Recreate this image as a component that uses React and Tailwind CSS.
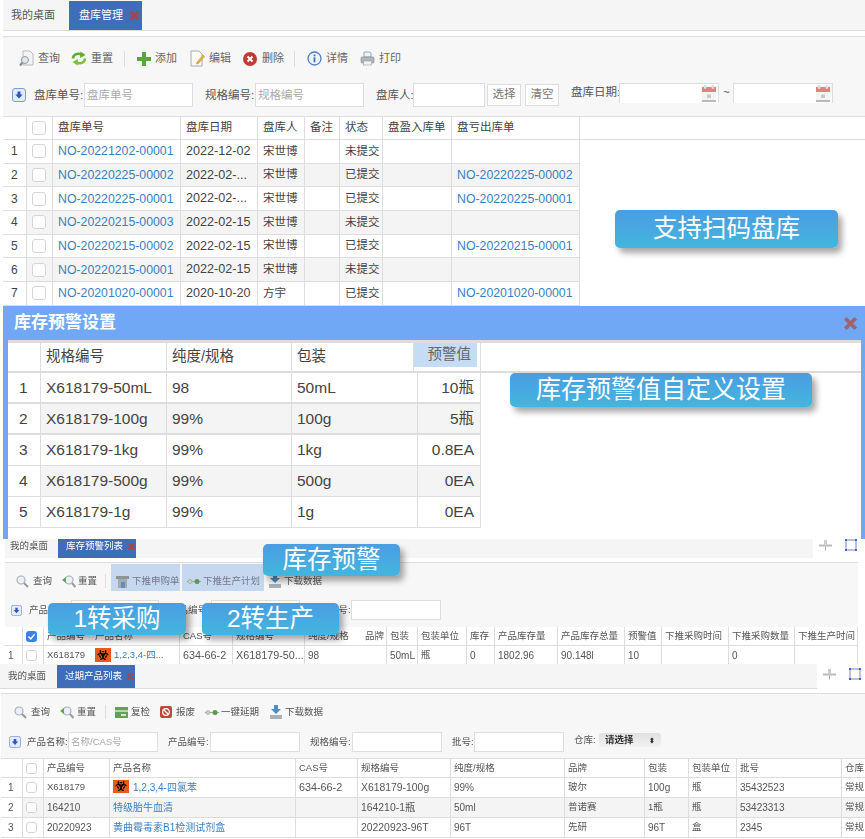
import React from 'react';
import { Biohazard } from 'lucide-react';

const FONT = "font-['Liberation_Sans','Noto_Sans_CJK_SC',sans-serif]";

// Icons
const SearchDoc = () => (
  <svg width="15" height="17" viewBox="0 0 15 17">
    <path d="M4 1h7l3 3v11H4z" fill="#f4f4f4" stroke="#bbb" />
    <circle cx="6" cy="10" r="3.5" fill="#dfe8ee" stroke="#999" />
    <path d="M3.5 12.5L1 15.5" stroke="#888" strokeWidth="2" />
  </svg>
);
const Reload = () => (
  <svg width="16" height="15" viewBox="0 0 16 15">
    <path d="M2 7.5C2 4 6 1.500 10.500 3.500" fill="none" stroke="#5fae2e" strokeWidth="2.6" />
    <path d="M9.500 0.500L14.500 4 9 7z" fill="#5fae2e" />
    <path d="M14 7.500C14 11 10 13.500 5.500 11.500" fill="none" stroke="#7dc242" strokeWidth="2.6" />
    <path d="M6.500 14.500L1.500 11 7 8z" fill="#7dc242" />
  </svg>
);
const Plus = () => (
  <svg width="14" height="14" viewBox="0 0 14 14">
    <path d="M5 0h4v5h5v4H9v5H5V9H0V5h5z" fill="#57a83a" />
  </svg>
);
const EditDoc = () => (
  <svg width="15" height="17" viewBox="0 0 15 17">
    <path d="M1 1h8l3 3v12H1z" fill="#fbfbf5" stroke="#aaa" />
    <path d="M7 12l6-7 1.5 1.5-6 7-2 .5z" fill="#e8b43c" stroke="#b5862a" strokeWidth="0.5" />
  </svg>
);
const DeleteIcon = () => (
  <svg width="14" height="14" viewBox="0 0 14 14">
    <circle cx="7" cy="7" r="7" fill="#c23b36" />
    <path d="M4.5 4.5l5 5M9.5 4.5l-5 5" stroke="#fff" strokeWidth="2" />
  </svg>
);
const InfoIcon = () => (
  <svg width="15" height="15" viewBox="0 0 15 15">
    <circle cx="7.5" cy="7.5" r="6.5" fill="#eef4fc" stroke="#4f7fc8" strokeWidth="1.3" />
    <rect x="6.6" y="6.3" width="1.8" height="5" fill="#3f6fb8" />
    <rect x="6.6" y="3.5" width="1.8" height="1.8" fill="#3f6fb8" />
  </svg>
);
const Printer = () => (
  <svg width="15" height="15" viewBox="0 0 15 15">
    <path d="M4 1h6l1 1v4H4z" fill="#eef3f8" stroke="#9aa5b0" />
    <rect x="1" y="6" width="13" height="6" rx="1" fill="#aeb6bd" stroke="#808890" strokeWidth="0.6" />
    <rect x="3.5" y="10" width="8" height="4" fill="#f2f2f2" stroke="#999" strokeWidth="0.6" />
  </svg>
);
const ArrowButton = ({ size = 'w-[14px] h-[14px]' }) => (
  <svg className={size} viewBox="0 0 14 14">
    <rect x="0.5" y="0.5" width="13" height="13" rx="2.5" fill="#e3ecfa" stroke="#7d9bd6" />
    <path d="M5.5 3.5h3v3h2.2L7 10.5 3.3 6.5h2.2z" fill="#2b56c4" />
  </svg>
);
const Calendar = () => (
  <svg width="14" height="17" viewBox="0 0 14 17">
    <rect x="0" y="1" width="14" height="16" fill="#f4f4f2" />
    <rect x="0" y="2" width="14" height="5" fill="#e2827c" />
    <rect x="2" y="0" width="2.5" height="4" rx="1" fill="#ddd" />
    <rect x="9.5" y="0" width="2.5" height="4" rx="1" fill="#ddd" />
    <rect x="0" y="15" width="14" height="2" fill="#b9b9b9" />
    <rect x="5" y="9.5" width="4" height="3.5" fill="#c9c9c9" />
  </svg>
);
const CloseX = ({ size = 'w-[13px] h-[13px]', color = '#a8444e' }) => (
  <svg className={size} viewBox="0 0 13 13">
    <path d="M1.5 3.5l2-2 3 3 3-3 2 2-3 3 3 3-2 2-3-3-3 3-2-2 3-3z" fill={color} />
  </svg>
);
const Magnifier = () => (
  <svg width="13" height="13" viewBox="0 0 13 13">
    <circle cx="5" cy="5" r="4" fill="#eaf0f5" stroke="#aab2ba" strokeWidth="1.2" />
    <path d="M8 8l4 4" stroke="#999" strokeWidth="2" />
  </svg>
);
const ResetGlass = () => (
  <svg width="14" height="13" viewBox="0 0 14 13">
    <circle cx="7" cy="5" r="4" fill="#eaf0f5" stroke="#aab2ba" strokeWidth="1.2" />
    <path d="M10 8l3.5 4" stroke="#999" strokeWidth="2" />
    <path d="M0 5l4-3v6z" fill="#5fa83e" />
  </svg>
);
const LinkIcon = () => (
  <svg width="14" height="7" viewBox="0 0 14 7">
    <path d="M0 3.5h14" stroke="#9ab08f" strokeWidth="1" />
    <circle cx="3" cy="3.5" r="2" fill="#c9d4c4" stroke="#8d9c88" strokeWidth="0.6" />
    <circle cx="10" cy="3.5" r="2.5" fill="#5d9a4f" />
  </svg>
);
const Download = () => (
  <svg width="12" height="14" viewBox="0 0 12 14">
    <path d="M4 0h4v4h3L6 9 1 4h3z" fill="#4a90c8" />
    <rect x="0" y="10" width="12" height="4" fill="#a9b0b6" />
  </svg>
);
const Building = () => (
  <svg width="13" height="13" viewBox="0 0 13 13">
    <rect x="0" y="1" width="13" height="3" fill="#8d9498" />
    <rect x="2" y="4" width="9" height="9" fill="#a4abb0" />
    <rect x="5" y="7" width="4" height="6" fill="#5f8fbd" />
  </svg>
);
const CardIcon = () => (
  <svg width="13" height="11" viewBox="0 0 13 11">
    <rect width="13" height="11" fill="#5fa05a" />
    <rect x="0" y="3" width="13" height="2" fill="#b7d7a8" />
    <rect x="6" y="7" width="5" height="2" fill="#d9e8c8" />
  </svg>
);
const ScrapIcon = () => (
  <svg width="12" height="12" viewBox="0 0 12 12">
    <rect width="12" height="12" rx="2" fill="#c2463c" />
    <circle cx="6" cy="6" r="3.3" fill="none" stroke="#fff" strokeWidth="1.2" />
    <path d="M3.5 3.5l5 5" stroke="#fff" strokeWidth="1.2" />
  </svg>
);
const PinIcon = () => (
  <svg width="13" height="11" viewBox="0 0 13 11">
    <rect x="0" y="4.5" width="13" height="2" fill="#bbb" />
    <rect x="5" y="0" width="3" height="4.5" fill="#ccc" />
    <rect x="6" y="6.5" width="1" height="4" fill="#aaa" />
  </svg>
);
const SquareIcon = () => (
  <svg width="12" height="12" viewBox="0 0 12 12">
    <rect x="1" y="1" width="10" height="10" fill="none" stroke="#8d9cc4" strokeWidth="1.2" />
    <rect x="0" y="0" width="2" height="2" fill="#4466cc" />
    <rect x="10" y="0" width="2" height="2" fill="#4466cc" />
    <rect x="0" y="10" width="2" height="2" fill="#4466cc" />
    <rect x="10" y="10" width="2" height="2" fill="#4466cc" />
  </svg>
);
const Hazard = ({ className }) => (
  <span className={`inline-flex shrink-0 items-center justify-center bg-[#ef5a1c] ${className}`}>
    <Biohazard className="w-[12px] h-[12px] text-black" strokeWidth={2.5} />
  </span>
);

const Check = ({ checked, size = 'w-[14px] h-[14px]' }) =>
  checked ? (
    <span className={`block rounded-[3px] bg-[#3b82e6] ${size}`}>
      <svg viewBox="0 0 14 14" className="w-full h-full">
        <path d="M3 7l3 3 5-6" fill="none" stroke="#fff" strokeWidth="1.8" />
      </svg>
    </span>
  ) : (
    <span className={`block rounded-[3px] border border-[#d5d5d5] bg-white ${size}`} />
  );

const Tool = ({ icon, label, className = 'gap-[4px]' }) => (
  <div className={`flex shrink-0 items-center whitespace-nowrap ${className}`}>
    {icon}
    <span>{label}</span>
  </div>
);

const Callout = ({ className, children }) => (
  <div
    className={`absolute z-10 flex items-center justify-center whitespace-nowrap rounded-[5px] bg-gradient-to-b from-[#4a9de2] to-[#42b6de] text-white text-[24.5px] shadow-[4px_5px_6px_rgba(0,0,0,0.35)] ${FONT} ${className}`}
  >
    {children}
  </div>
);

// Generic row: cells sit in a grid, with a right border on each one
const Row = ({ cols, className = '', cells, cellClass = '' }) => (
  <div className={`grid ${cols} ${className}`}>
    {cells.map((c, i) => (
      <div
        key={i}
        className={`flex items-center border-r border-[#dddddd] overflow-hidden whitespace-nowrap first:bg-white ${cellClass}`}
      >
        {c}
      </div>
    ))}
  </div>
);

const LINK = 'text-[#3a7fc1]';

// small tables: latin text is a little wider than the CJK size suggests
const Small = ({ v }) => {
  if (!/^[\x00-\x7f]+$/.test(v)) return <span>{v}</span>;
  return <span className={v.includes('-') ? 'text-[10.8px]' : 'text-[10px]'}>{v}</span>;
};

const stockRows = [
  ['NO-20221202-00001', '2022-12-02', '宋世博', '未提交', ''],
  ['NO-20220225-00002', '2022-02-...', '宋世博', '已提交', 'NO-20220225-00002'],
  ['NO-20220225-00001', '2022-02-...', '宋世博', '已提交', 'NO-20220225-00001'],
  ['NO-20220215-00003', '2022-02-15', '宋世博', '未提交', ''],
  ['NO-20220215-00002', '2022-02-15', '宋世博', '已提交', 'NO-20220215-00001'],
  ['NO-20220215-00001', '2022-02-15', '宋世博', '未提交', ''],
  ['NO-20201020-00001', '2020-10-20', '方宇', '已提交', 'NO-20201020-00001'],
];

const StockCheck = () => {
  const cols = 'grid-cols-[24px_26px_128px_77px_47px_35px_43px_69px_128px]';
  return (
    <section className="relative h-[306px] bg-white text-[#444] text-[11.5px]">
      <div className="ml-[3px] h-[31px] bg-[#f5f5f5] border-b border-[#dcdcdc] flex text-[11px] whitespace-nowrap">
        <div className="ml-[8px] w-[58px] flex items-center text-[#555]">我的桌面</div>
        <div className="mt-[1px] w-[73px] bg-[#3f6db8] text-white flex items-center pl-[10px] gap-[5px]">
          盘库管理
          <CloseX />
        </div>
      </div>
      <div className="mt-[5px] ml-[3px] h-[80px] bg-[#f7f7f7] border-t border-[#dcdcdc]">
        <div className="flex items-center h-[43px] pl-[16px] text-[#666] text-[11px]">
          <Tool icon={<SearchDoc />} label="查询" />
          <Tool icon={<Reload />} label="重置" className="ml-[11px] gap-[4px]" />
          <div className="ml-[11px] w-px h-[16px] bg-[#ddd]" />
          <Tool icon={<Plus />} label="添加" className="ml-[12px] gap-[4px]" />
          <Tool icon={<EditDoc />} label="编辑" className="ml-[13px] gap-[4px]" />
          <Tool icon={<DeleteIcon />} label="删除" className="ml-[12px] gap-[5px]" />
          <div className="ml-[10px] w-px h-[16px] bg-[#ddd]" />
          <Tool icon={<InfoIcon />} label="详情" className="ml-[12px] gap-[4px]" />
          <Tool icon={<Printer />} label="打印" className="ml-[12px] gap-[4px]" />
        </div>
        <div className="flex items-start h-[25px] mt-[3px] pl-[9px] text-[#555] whitespace-nowrap">
          <div className="mt-[5px]">
            <ArrowButton />
          </div>
          <span className="ml-[8px] w-[50px] leading-[24px]">盘库单号:</span>
          <div className="w-[109px] h-[24px] border border-[#ddd] bg-white pl-[2px] leading-[22px] text-[#aaa]">盘库单号</div>
          <span className="ml-[12px] w-[50px] leading-[24px]">规格编号:</span>
          <div className="w-[109px] h-[24px] border border-[#ddd] bg-white pl-[2px] leading-[22px] text-[#aaa]">规格编号</div>
          <span className="ml-[12px] w-[37px] leading-[24px]">盘库人:</span>
          <div className="w-[72px] h-[24px] border border-[#ddd] bg-white" />
          <div className="ml-[2px] mt-[1px] w-[34px] h-[22px] border border-[#ddd] bg-white flex items-center justify-center text-[#777]">选择</div>
          <div className="ml-[4px] mt-[1px] w-[34px] h-[22px] border border-[#ddd] bg-white flex items-center justify-center text-[#777]">清空</div>
          <span className="ml-[12px] w-[48px] leading-[19px]">盘库日期:</span>
          <div className="w-[100px] h-[20px] border border-b-0 border-[#ddd] bg-white flex justify-end pr-[2px] pt-[1px]">
            <Calendar />
          </div>
          <span className="ml-[4px] w-[10px] leading-[19px]">~</span>
          <div className="w-[100px] h-[20px] border border-b-0 border-[#ddd] bg-white flex justify-end pr-[2px] pt-[1px]">
            <Calendar />
          </div>
        </div>
      </div>
      <div className="ml-[3px]">
        <div className="border-t border-[#dddddd]">
          <Row
            cols={cols}
            className="h-[23px] border-b border-[#dddddd]"
            cellClass="pl-[5px]"
            cells={['', <Check />, '盘库单号', '盘库日期', '盘库人', '备注', '状态', '盘盈入库单', '盘亏出库单']}
          />
        </div>
        {stockRows.map((r, i) => (
          <Row
            key={i}
            cols={cols}
            className={`h-[23.7px] w-[577px] border-b border-[#dddddd] ${i % 2 === 1 ? 'bg-[#f4f4f4]' : ''}`}
            cellClass="pl-[5px]"
            cells={[
              <span className="pl-[3px] text-[12px]">{i + 1}</span>,
              <Check />,
              <span className={`${LINK} text-[12.3px]`}>{r[0]}</span>,
              <span className="text-[12.6px]">{r[1]}</span>,
              r[2],
              '',
              r[3],
              '',
              <span className={`${LINK} text-[12.3px]`}>{r[4]}</span>,
            ]}
          />
        ))}
      </div>
      <Callout className="left-[615px] top-[210px] w-[223px] h-[38px]">支持扫码盘库</Callout>
    </section>
  );
};

const warnRows = [
  ['X618179-50mL', '98', '50mL', '10瓶'],
  ['X618179-100g', '99%', '100g', '5瓶'],
  ['X618179-1kg', '99%', '1kg', '0.8EA'],
  ['X618179-500g', '99%', '500g', '0EA'],
  ['X618179-1g', '99%', '1g', '0EA'],
];

const WarnDialog = () => {
  const cols = 'grid-cols-[33px_126px_125px_126px_63px]';
  const headCols = 'grid-cols-[33px_126px_125px_122px_67px]';
  return (
    <section className="relative h-[233px] pl-[3px] bg-white">
      <div className="h-full bg-[#70a8f5] flex flex-col">
        <div className="h-[34px] flex items-center justify-between pl-[11px] pr-[6px] text-white font-bold text-[17px]">
          库存预警设置
          <CloseX size="w-[17px] h-[17px]" color="#a0646e" />
        </div>
        <div className="ml-[5px] mr-[4px] flex-1 bg-white border-t-[3px] border-[#dddddd] text-[#444] text-[15.5px]">
          <div className="border-b-2 border-[#dddddd] h-[30px]">
            <Row
              cols={headCols}
              className="h-full w-[473px]"
              cellClass="pl-[5px] last:pl-0"
              cells={[
                '',
                <span className="text-[14.5px]">规格编号</span>,
                <span className="text-[14.5px]">纯度/规格</span>,
                <span className="text-[14.5px]">包装</span>,
                <span className="w-[63px] h-[24px] self-start bg-[#c5dcf7] text-[#666] text-[14.5px] flex items-center justify-end pr-[6px]">预警值</span>,
              ]}
            />
          </div>
          {warnRows.map((r, i) => (
            <Row
              key={i}
              cols={cols}
              className={`w-[473px] h-[31px] ${i < 2 ? 'border-b-2' : 'border-b'} border-[#dddddd] ${i % 2 === 1 ? 'bg-[#f4f4f4]' : ''}`}
              cellClass="pl-[5px]"
              cells={[
                <span className="pl-[6px]">{i + 1}</span>,
                r[0],
                r[1],
                r[2],
                <span className="w-full text-right pr-[6px]">{r[3]}</span>,
              ]}
            />
          ))}
        </div>
      </div>
      <Callout className="left-[510px] top-[67px] w-[302px] h-[34px] text-[25px]">库存预警值自定义设置</Callout>
    </section>
  );
};

const WarnList = () => {
  const cols = 'grid-cols-[18px_21px_136px_53px_72px_82px_31px_49px_28px_63px_67px_37px_67px_66px_63px]';
  return (
    <section className="relative h-[125px] bg-white text-[9.5px] text-[#555] whitespace-nowrap">
      <div className="blur-[0.4px] h-full">
        <div className="flex h-[23px] items-start">
          <div className="ml-[5px] w-[808px] h-[19px] bg-[#f5f5f5] flex">
            <div className="ml-[5px] w-[48px] pb-[4px] flex items-center">我的桌面</div>
            <div className="w-[78px] pb-[4px] bg-[#3f6db8] text-white flex items-center pl-[8px] gap-[4px]">
              库存预警列表
              <CloseX size="w-[9px] h-[9px]" />
            </div>
          </div>
          <div className="ml-[6px] h-[12px] flex items-center gap-[13px]">
            <PinIcon />
            <SquareIcon />
          </div>
        </div>
        <div className="ml-[5px] w-[853px] h-[65px] bg-[#f7f7f7] border-t border-[#dddddd]">
          <div className="flex items-center h-[36px] pl-[11px]">
            <Tool icon={<Magnifier />} label="查询" className="gap-[4px]" />
            <Tool icon={<ResetGlass />} label="重置" className="ml-[10px] gap-[2px]" />
            <div className="ml-[8px] w-px h-[14px] bg-[#ddd]" />
            <Tool icon={<Building />} label="下推申购单" className="ml-[5px] self-start mt-[1px] w-[69px] h-[27px] bg-[#c5d8f0] pl-[5px] pt-[7px] gap-[3px] text-[#778]" />
            <Tool icon={<LinkIcon />} label="下推生产计划" className="ml-[2px] self-start mt-[1px] w-[82px] h-[27px] bg-[#c5d8f0] pl-[5px] pt-[7px] gap-[2px] text-[#778]" />
            <Tool icon={<Download />} label="下载数据" className="ml-[5px] gap-[3px]" />
          </div>
          <div className="flex items-center h-[20px] mt-[1px] pl-[6px]">
            <ArrowButton size="w-[11px] h-[11px]" />
            <span className="ml-[7px] w-[42px]">产品名称:</span>
            <div className="w-[88px] h-[20px] border border-[#ddd] bg-white pl-[2px] leading-[18px] text-[#aaa]">名称/CAS号</div>
            <span className="ml-[10px] w-[42px]">产品编号:</span>
            <div className="w-[89px] h-[20px] border border-[#ddd] bg-white" />
            <span className="ml-[10px] w-[41px]">规格编号:</span>
            <div className="w-[90px] h-[20px] border border-[#ddd] bg-white" />
          </div>
        </div>
        <div className="ml-[5px] w-[853px]">
          <Row
            cols={cols}
            className="h-[19px] bg-white border-b border-[#dddddd]"
            cellClass="pl-[3px]"
            cells={[
              '',
              <Check checked size="w-[11px] h-[11px]" />,
              <span className="flex">
                <span className="w-[48px]">产品编号</span>产品名称
              </span>,
              'CAS号',
              '规格编号',
              <span className="flex">
                <span className="w-[57px]">纯度/规格</span>品牌
              </span>,
              '包装',
              '包装单位',
              '库存',
              '产品库存量',
              '产品库存总量',
              '预警值',
              '下推采购时间',
              '下推采购数量',
              '下推生产时间',
            ]}
          />
          <Row
            cols={cols}
            className="h-[18px] bg-white"
            cellClass="pl-[3px]"
            cells={[
              <Small v="1" />,
              <Check size="w-[11px] h-[11px]" />,
              <span className="flex items-center">
                <span className="w-[48px] text-[9.5px]">X618179</span>
                <Hazard className="w-[16px] h-[14px] mr-[3px]" />
                <span className={LINK}>1,2,3,4-四...</span>
              </span>,
              <Small v="634-66-2" />,
              <Small v="X618179-50..." />,
              <Small v="98" />,
              <Small v="50mL" />,
              '瓶',
              <Small v="0" />,
              <Small v="1802.96" />,
              <Small v="90.148l" />,
              <Small v="10" />,
              '',
              <Small v="0" />,
              '',
            ]}
          />
        </div>
      </div>
      <Callout className="left-[263px] top-[5px] w-[137px] h-[32px]">库存预警</Callout>
      <Callout className="left-[48px] top-[64px] w-[138px] h-[32px]">1转采购</Callout>
      <Callout className="left-[202px] top-[64px] w-[137px] h-[32px]">2转生产</Callout>
    </section>
  );
};

const expiredRows = [
  ['X618179', '1,2,3,4-四氯苯', '634-66-2', 'X618179-100g', '99%', '玻尔', '100g', '瓶', '35432523', '常规'],
  ['164210', '特级胎牛血清', '', '164210-1瓶', '50ml', '普诺赛', '1瓶', '瓶', '53423313', '常规'],
  ['20220923', '黄曲霉毒素B1检测试剂盒', '', '20220923-96T', '96T', '先研', '96T', '盒', '2345', '常规'],
];

const ExpiredList = () => {
  const cols = 'grid-cols-[22px_21px_66px_186px_62px_93px_114px_80px_44px_48px_105px_24px]';
  return (
    <section className="h-[175px] bg-white text-[9.5px] text-[#555] blur-[0.4px] overflow-hidden whitespace-nowrap">
      <div className="flex h-[29px] items-start">
        <div className="w-[817px] h-[25px] bg-[#f5f5f5] border-b border-[#dddddd] flex">
          <div className="ml-[8px] w-[49px] flex items-center">我的桌面</div>
          <div className="mt-[1px] w-[78px] bg-[#3f6db8] text-white flex items-center pl-[8px] gap-[4px]">
            过期产品列表
            <CloseX size="w-[9px] h-[9px]" />
          </div>
        </div>
        <div className="ml-[6px] h-[20px] flex items-center gap-[13px]">
          <PinIcon />
          <SquareIcon />
        </div>
      </div>
      <div className="ml-[1px] h-[65px] bg-[#f7f7f7] border-t border-[#dddddd]">
        <div className="flex items-center h-[36px] pl-[13px]">
          <Tool icon={<Magnifier />} label="查询" className="gap-[4px]" />
          <Tool icon={<ResetGlass />} label="重置" className="ml-[10px] gap-[3px]" />
          <div className="ml-[9px] w-px h-[14px] bg-[#ddd]" />
          <Tool icon={<CardIcon />} label="复检" className="ml-[9px] gap-[3px]" />
          <Tool icon={<ScrapIcon />} label="报废" className="ml-[10px] gap-[4px]" />
          <Tool icon={<LinkIcon />} label="一键延期" className="ml-[10px] gap-[2px]" />
          <Tool icon={<Download />} label="下载数据" className="ml-[11px] gap-[3px]" />
        </div>
        <div className="flex items-center h-[20px] mt-[2px] pl-[8px]">
          <ArrowButton size="w-[12px] h-[12px]" />
          <span className="ml-[6px] w-[41px]">产品名称:</span>
          <div className="w-[90px] h-[20px] border border-[#ddd] bg-white pl-[2px] leading-[18px] text-[#aaa]">名称/CAS号</div>
          <span className="ml-[10px] w-[42px]">产品编号:</span>
          <div className="w-[90px] h-[20px] border border-[#ddd] bg-white" />
          <span className="ml-[10px] w-[42px]">规格编号:</span>
          <div className="w-[90px] h-[20px] border border-[#ddd] bg-white" />
          <span className="ml-[10px] w-[22px]">批号:</span>
          <div className="w-[90px] h-[20px] border border-[#ddd] bg-white" />
          <span className="ml-[10px] w-[25px] -mt-[4px]">仓库:</span>
          <div className="w-[62px] h-[14px] -mt-[4px] rounded-[3px] bg-gradient-to-b from-[#e0e0e0] to-[#f2f2f2] flex items-center justify-between px-[6px] text-[#333] font-bold">
            请选择
            <span className="text-[7px] leading-none">⬍</span>
          </div>
        </div>
      </div>
      <div className="ml-[1px]">
        <Row
          cols={cols}
          className="h-[20px] border-t border-b border-[#dddddd]"
          cellClass="pl-[3px]"
          cells={['', <Check size="w-[11px] h-[11px]" />, '产品编号', '产品名称', 'CAS号', '规格编号', '纯度/规格', '品牌', '包装', '包装单位', '批号', '仓库']}
        />
        {expiredRows.map((r, i) => (
          <Row
            key={i}
            cols={cols}
            className={`h-[20px] border-b border-[#dddddd] ${i === 1 ? 'bg-[#f4f4f4]' : ''}`}
            cellClass="pl-[3px]"
            cells={[
              <span className="pl-[4px]">
                <Small v={String(i + 1)} />
              </span>,
              <Check size="w-[11px] h-[11px]" />,
              <span className={i === 0 ? 'text-[9.5px]' : 'text-[10px]'}>{r[0]}</span>,
              <span className="flex items-center">
                {i === 0 && <Hazard className="w-[16px] h-[13px] mr-[4px] -mt-[3px]" />}
                <span className={`${LINK} text-[10px]`}>{r[1]}</span>
              </span>,
              <Small v={r[2]} />,
              <span className="text-[10.4px]">{r[3]}</span>,
              <Small v={r[4]} />,
              r[5],
              <Small v={r[6]} />,
              r[7],
              <Small v={r[8]} />,
              r[9],
            ]}
          />
        ))}
      </div>
    </section>
  );
};

const App = () => (
  <div className={`w-[865px] h-[839px] overflow-hidden bg-white ${FONT}`}>
    <StockCheck />
    <WarnDialog />
    <WarnList />
    <ExpiredList />
  </div>
);

export default App;
